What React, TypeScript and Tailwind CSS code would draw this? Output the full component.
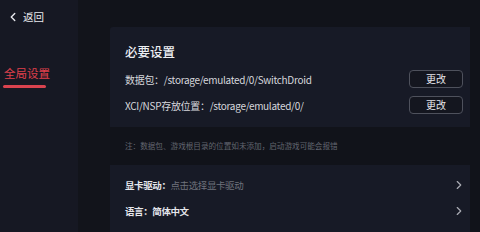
import { ChevronLeft, ChevronRight } from "lucide-react";

const font = { fontFamily: '"Noto Sans CJK SC", "Noto Sans", sans-serif' };

function PathRow({ label, path }: { label: string; path: string }) {
  return (
    <div className="flex items-center justify-between h-[26px]">
      <span className="text-[10px] text-[#d6d7dc] tracking-[-0.3px]">
        {label}
        {path}
      </span>
      <button className="w-[54px] h-[18px] rounded-[4px] border border-[#4e515c] bg-[#14161f] text-[10px] text-[#e4e5ea] leading-none">
        更改
      </button>
    </div>
  );
}

function LinkRow({ label, value, dim }: { label: string; value: string; dim?: boolean }) {
  return (
    <div className="flex items-center justify-between h-[26px]">
      <span className="text-[9.5px] tracking-[-0.4px]">
        <span className="font-bold text-[#e6e7ec]">{label}</span>
        <span className={dim ? "text-[#6f727c]" : "font-bold text-[#e6e7ec]"}>{value}</span>
      </span>
      <ChevronRight size={14} strokeWidth={2} className="text-[#a9abb3]" />
    </div>
  );
}

export default function App() {
  return (
    <div className="flex w-[480px] h-[232px] overflow-hidden bg-[#11131a]" style={font}>
      <div className="w-[78px] bg-[#161823] flex flex-col">
        <div className="flex items-center gap-[3px] pl-[6px] pt-[9px]">
          <ChevronLeft size={14} strokeWidth={2.4} className="text-[#e8e9ee]" />
          <span className="text-[10.5px] text-[#e8e9ee]">返回</span>
        </div>
        <div className="mt-[40px] pl-[3px] w-[46px]">
          <div className="text-[11.5px] text-[#e0404c] whitespace-nowrap pl-[1px]">全局设置</div>
          <div className="mt-[3px] h-[3px] rounded-full bg-[#d9434f]" />
        </div>
      </div>
      <div className="w-[32px] bg-[#12141b]" />
      <div className="flex-1 pt-[27px] pr-[10px] flex flex-col">
        <div className="h-[100px] bg-[#171a26] rounded-tl-[3px] pl-[15px] pr-[7px] pt-[15px]">
          <div className="h-[20px] mb-[4px] flex items-center text-[12.5px] font-medium text-[#eceef2]">必要设置</div>
          <PathRow label="数据包：" path="/storage/emulated/0/SwitchDroid" />
          <PathRow label="XCI/NSP存放位置：" path="/storage/emulated/0/" />
        </div>
        <div className="h-[38px] flex items-center pl-[15px] text-[7.6px] text-[#62656f]">
          注：数据包、游戏根目录的位置如未添加，启动游戏可能会报错
        </div>
        <div className="flex-1 bg-[#171a26] pl-[15px] pr-[4px] pt-[7px]">
          <LinkRow label="显卡驱动：" value="点击选择显卡驱动" dim />
          <LinkRow label="语言：" value="简体中文" />
        </div>
      </div>
    </div>
  );
}
